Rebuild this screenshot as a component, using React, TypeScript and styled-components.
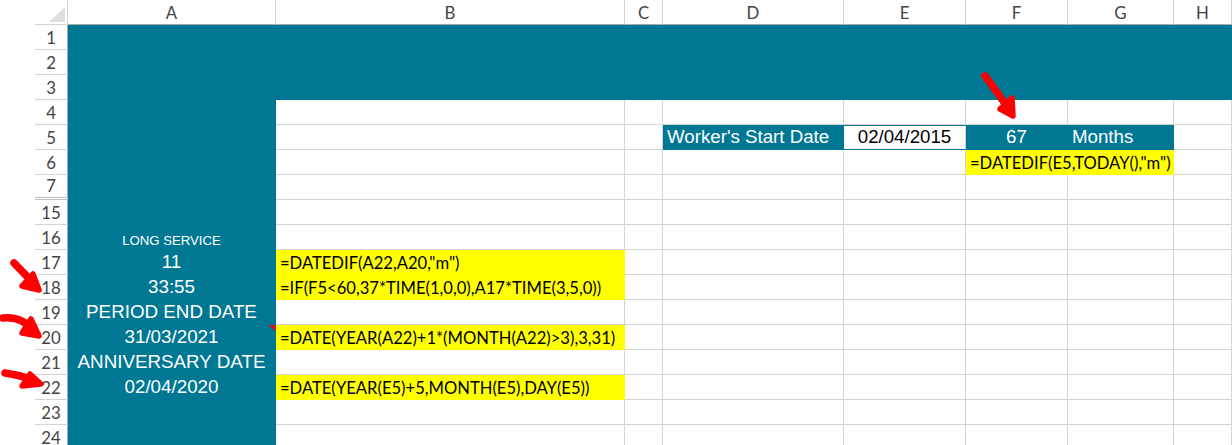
import React from 'react';
import styled, { createGlobalStyle, css } from 'styled-components';

const TEAL = '#007893';
const YELLOW = '#ffff00';
const GRID = '#d4d4d4';
const HEAD_LINE = '#ababab';
const RED = '#ff0000';

type Fill = 'none' | 'teal' | 'yellow';
type Face = 'arial' | 'calibri';
type Align = 'left' | 'center';

type Spec = {
  text?: string;
  fill?: Fill;
  face?: Face;
  size?: number;
  align?: Align;
  span?: number;
  framed?: boolean;
  note?: boolean;
};

const FILLS: Record<Fill, string> = { none: '#ffffff', teal: TEAL, yellow: YELLOW };
const FACES: Record<Face, string> = {
  arial: '"Liberation Sans", Arial, sans-serif',
  calibri: 'Lato, "Liberation Sans", sans-serif',
};

const COLS = [
  { key: 'A', width: 208 },
  { key: 'B', width: 349 },
  { key: 'C', width: 38 },
  { key: 'D', width: 181 },
  { key: 'E', width: 122 },
  { key: 'F', width: 102 },
  { key: 'G', width: 106 },
  { key: 'H', width: 0 },
];

const ROWS = [1, 2, 3, 4, 5, 6, 7, 15, 16, 17, 18, 19, 20, 21, 22, 23, 24];

const A_TEXT = { align: 'center' as Align, face: 'arial' as Face, size: 18.8 };
const FORMULA = { fill: 'yellow' as Fill, face: 'calibri' as Face, size: 16.6 };

const SPECS: Record<string, Spec> = {
  A16: { ...A_TEXT, text: 'LONG SERVICE', size: 13.2 },
  A17: { ...A_TEXT, text: '11' },
  A18: { ...A_TEXT, text: '33:55' },
  A19: { ...A_TEXT, text: 'PERIOD END DATE' },
  A20: { ...A_TEXT, text: '31/03/2021', note: true },
  A21: { ...A_TEXT, text: 'ANNIVERSARY DATE' },
  A22: { ...A_TEXT, text: '02/04/2020' },
  B17: { ...FORMULA, text: '=DATEDIF(A22,A20,"m")' },
  B18: { ...FORMULA, text: '=IF(F5<60,37*TIME(1,0,0),A17*TIME(3,5,0))' },
  B20: { ...FORMULA, text: '=DATE(YEAR(A22)+1*(MONTH(A22)>3),3,31)' },
  B22: { ...FORMULA, text: '=DATE(YEAR(E5)+5,MONTH(E5),DAY(E5))' },
  D5: { fill: 'teal', text: "Worker's Start Date", face: 'arial', size: 18.7 },
  E5: { fill: 'none', text: '02/04/2015', face: 'arial', size: 18.7, align: 'center', framed: true },
  F5: { fill: 'teal', text: '67', face: 'arial', size: 18.7, align: 'center' },
  G5: { fill: 'teal', text: 'Months', face: 'arial', size: 18.7 },
  F6: { ...FORMULA, text: '=DATEDIF(E5,TODAY(),"m")', span: 2 },
};

function specFor(col: string, row: number): Spec | null {
  if (col === 'G' && row === 6) return null; // covered by F6
  const base: Spec = { fill: row <= 3 || col === 'A' ? 'teal' : 'none' };
  return { ...base, ...SPECS[col + row] };
}

const GlobalStyle = createGlobalStyle`
  html, body {
    margin: 0;
    padding: 0;
    background: #ffffff;
  }
  body {
    font-family: Lato, "Liberation Sans", sans-serif;
    overflow: hidden;
  }
`;

const Page = styled.div`
  position: relative;
  width: 1232px;
  height: 445px;
  overflow: hidden;
  background: #ffffff;
`;

const Sheet = styled.div`
  display: grid;
  grid-template-columns: 35px 33px ${COLS.filter(c => c.width).map(c => `${c.width}px`).join(' ')} 1fr;
  grid-auto-rows: 25px;
`;

const Gutter = styled.div``;

const HeaderBase = css`
  box-sizing: border-box;
  display: flex;
  align-items: flex-end;
  justify-content: center;
  padding-bottom: 0.5px;
  font-family: ${FACES.calibri};
  font-size: 16.8px;
  line-height: 1.2;
  color: #444444;
`;

const Corner = styled.div`
  ${HeaderBase};
  position: relative;
  border-right: 1px solid ${GRID};
  border-bottom: 1px solid ${GRID};

  &::after {
    content: '';
    position: absolute;
    right: 2px;
    bottom: 2px;
    width: 16px;
    height: 15px;
    background: #dfdfdf;
    clip-path: polygon(100% 0, 100% 100%, 0 100%);
  }
`;

const ColHeader = styled.div`
  ${HeaderBase};
  border-right: 1px solid ${GRID};
  border-bottom: 1px solid ${HEAD_LINE};
`;

const RowHeader = styled.div<{ $gap: boolean }>`
  ${HeaderBase};
  border-right: 1px solid ${HEAD_LINE};
  border-bottom: ${p => (p.$gap ? `3px double #bdbdbd` : `1px solid ${GRID}`)};
`;

const Cell = styled.div<{
  $fill: Fill;
  $face: Face;
  $size: number;
  $align: Align;
  $span: number;
  $framed: boolean;
  $note: boolean;
}>`
  position: relative;
  box-sizing: border-box;
  grid-column: span ${p => p.$span};
  display: flex;
  align-items: flex-end;
  justify-content: ${p => (p.$align === 'center' ? 'center' : 'flex-start')};
  padding: 0 4px 0.5px;
  white-space: nowrap;
  background: ${p => FILLS[p.$fill]};
  border-right: 1px solid ${p => (p.$fill === 'none' ? GRID : FILLS[p.$fill])};
  border-bottom: 1px solid ${p => (p.$fill === 'none' ? GRID : FILLS[p.$fill])};
  color: ${p => (p.$fill === 'teal' ? '#ffffff' : '#000000')};
  font-family: ${p => FACES[p.$face]};
  font-size: ${p => p.$size}px;
  line-height: 1.2;

  ${p =>
    p.$framed &&
    css`
      border-top: 1px solid ${TEAL};
      border-bottom-color: ${TEAL};
    `}

  ${p =>
    p.$note &&
    css`
      &::after {
        content: '';
        position: absolute;
        top: 0;
        right: 0;
        width: 6px;
        height: 6px;
        background: ${RED};
        clip-path: polygon(0 0, 100% 0, 100% 100%);
      }
    `}
`;

const Marks = styled.svg`
  position: absolute;
  top: 0;
  left: 0;
  pointer-events: none;
`;

const Arrow = ({ shaft, head }: { shaft: string; head: string }) => (
  <g>
    <path d={shaft} fill="none" stroke={RED} strokeWidth={7.5} strokeLinecap="round" strokeLinejoin="round" />
    <path d={head} fill={RED} stroke={RED} strokeWidth={5.5} strokeLinecap="round" strokeLinejoin="round" />
  </g>
);

const App = () => (
  <Page>
    <GlobalStyle />
    <Sheet>
      <Gutter />
      <Corner />
      {COLS.map(c => (
        <ColHeader key={c.key}>{c.key}</ColHeader>
      ))}

      {ROWS.map(row => (
        <React.Fragment key={row}>
          <Gutter />
          <RowHeader $gap={row === 7}>{row}</RowHeader>
          {COLS.map(c => {
            const s = specFor(c.key, row);
            if (!s) return null;
            return (
              <Cell
                key={c.key}
                $fill={s.fill ?? 'none'}
                $face={s.face ?? 'arial'}
                $size={s.size ?? 18.7}
                $align={s.align ?? 'left'}
                $span={s.span ?? 1}
                $framed={!!s.framed}
                $note={!!s.note}
              >
                {s.text}
              </Cell>
            );
          })}
        </React.Fragment>
      ))}
    </Sheet>

    <Marks width={1232} height={445} viewBox="0 0 1232 445">
      <Arrow shaft="M985 76 Q996 90 1009 110" head="M1012 98 L1013 116 L1000 109 Z" />
      <Arrow shaft="M14 263 Q24 273 35 285" head="M33 274 L39 290 L22 286 Z" />
      <Arrow shaft="M3 318 Q22 316 34 331" head="M31 319 L39 336 L22 333 Z" />
      <Arrow shaft="M5 373 Q20 375 34 380" head="M30 374 L41 384 L22 386 Z" />
    </Marks>
  </Page>
);

export default App;
